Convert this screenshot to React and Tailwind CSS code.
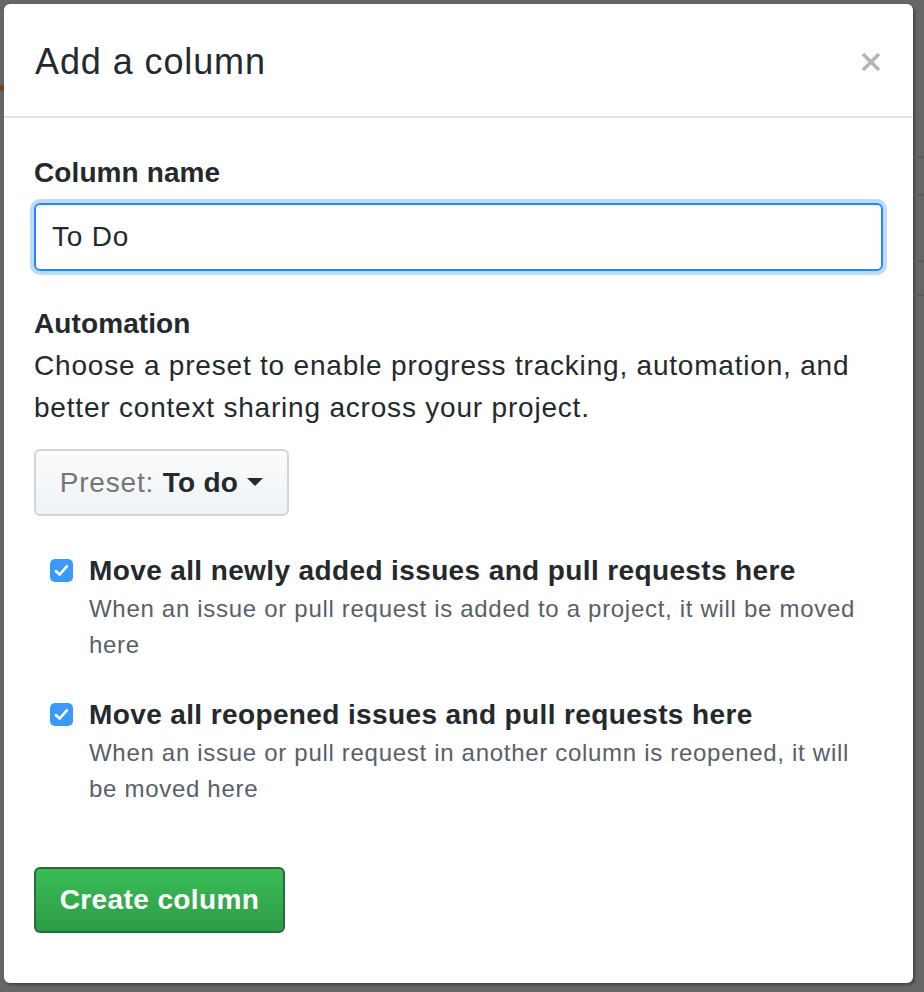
import React from "react";

function CheckIcon() {
  return (
    <span className="mt-[9px] flex h-[23px] w-[23px] shrink-0 items-center justify-center rounded-[5px] bg-[#3b99fc]">
      <svg width="15" height="13" viewBox="0 0 15 13" fill="none">
        <path d="M2 7.2 L5.6 10.6 L13 2.2" stroke="white" strokeWidth="2.6" strokeLinecap="round" strokeLinejoin="round" />
      </svg>
    </span>
  );
}

function Option({ title, desc }) {
  return (
    <div className="flex gap-[16px] pl-[16px]">
      <CheckIcon />
      <div className="flex flex-col">
        <div className="text-[28px] font-bold leading-[42px] tracking-[0.38px] text-[#24292e]">{title}</div>
        <div className="-mt-[1px] max-w-[776px] text-[24px] leading-[36px] tracking-[0.7px] text-[#586069]">{desc}</div>
      </div>
    </div>
  );
}

export default function App() {
  return (
    <div
      className="flex h-[992px] w-[924px] bg-[#666666]"
      style={{ fontFamily: '"Liberation Sans", Arial, sans-serif' }}
    >
      <div className="flex w-[4px] shrink-0 flex-col">
        <div className="h-[85px]" />
        <div className="h-[6px] bg-[#7a4526]" />
      </div>
      <div className="mt-[4px] flex h-[979px] w-[909px] shrink-0 flex-col rounded-[6px] bg-white shadow-[2px_2px_3px_rgba(0,0,0,0.35)]">
        <div className="flex h-[114px] items-center justify-between border-b-2 border-[#e1e4e8] pl-[31px] pr-[30px] pt-[4px]">
          <h1 className="text-[36px] leading-none tracking-[0.9px] text-[#24292e]">Add a column</h1>
          <svg width="22" height="22" viewBox="0 0 22 22" className="mr-[1px]">
            <path d="M3 3 L19 19 M19 3 L3 19" stroke="#b5b5b5" strokeWidth="3.6" strokeLinecap="butt" />
          </svg>
        </div>
        <div className="flex flex-col px-[30px] pt-[34px]">
          <label className="text-[28px] font-bold leading-[42px] tracking-[0.1px] text-[#24292e]">Column name</label>
          <div className="mt-[9px] flex h-[68px] items-center rounded-[6px] border-2 border-[#2188ff] pl-[16px] text-[28px] tracking-[0.8px] text-[#24292e] shadow-[0_0_0_4px_rgba(33,136,255,0.3)]">
            To Do
          </div>
          <div className="mt-[32px] text-[28px] font-bold leading-[42px] tracking-[0.1px] text-[#24292e]">Automation</div>
          <p className="text-[28px] leading-[42px] tracking-[0.8px] text-[#24292e]">
            Choose a preset to enable progress tracking, automation, and
            <br />
            better context sharing across your project.
          </p>
          <div className="mt-[20px] flex">
            <div className="flex h-[67px] w-[255px] items-center justify-center gap-[9px] rounded-[6px] border-2 border-[#d1d5da] bg-gradient-to-b from-[#fafbfc] to-[#eff3f6] text-[28px]">
              <span>
                <span className="tracking-[0.8px] text-[#767676]">Preset: </span>
                <span className="font-bold tracking-[0.3px] text-[#24292e]">To do</span>
              </span>
              <svg width="16" height="9" viewBox="0 0 16 9">
                <path d="M0 0 L16 0 L8 8 Z" fill="#24292e" />
              </svg>
            </div>
          </div>
          <div className="mt-[34px] flex flex-col gap-[31px]">
            <Option
              title="Move all newly added issues and pull requests here"
              desc="When an issue or pull request is added to a project, it will be moved here"
            />
            <Option
              title="Move all reopened issues and pull requests here"
              desc="When an issue or pull request in another column is reopened, it will be moved here"
            />
          </div>
          <div className="mt-[60px] flex">
            <button className="flex h-[66px] w-[251px] items-center justify-center rounded-[6px] border-2 border-[#2a6b39] bg-gradient-to-b from-[#3abd55] to-[#2d9b47] text-[28px] font-bold tracking-[0.4px] text-white">
              Create column
            </button>
          </div>
        </div>
      </div>
      <div className="flex flex-1 flex-col">
        <div className="h-[156px]" />
        <div className="h-[2px] bg-[#5c5c5c]" />
        <div className="h-[36px]" />
        <div className="h-[2px] bg-[#5c5c5c]" />
        <div className="h-[64px]" />
        <div className="h-[2px] bg-[#5c5c5c]" />
        <div className="h-[32px]" />
        <div className="h-[2px] bg-[#5c5c5c]" />
      </div>
    </div>
  );
}
